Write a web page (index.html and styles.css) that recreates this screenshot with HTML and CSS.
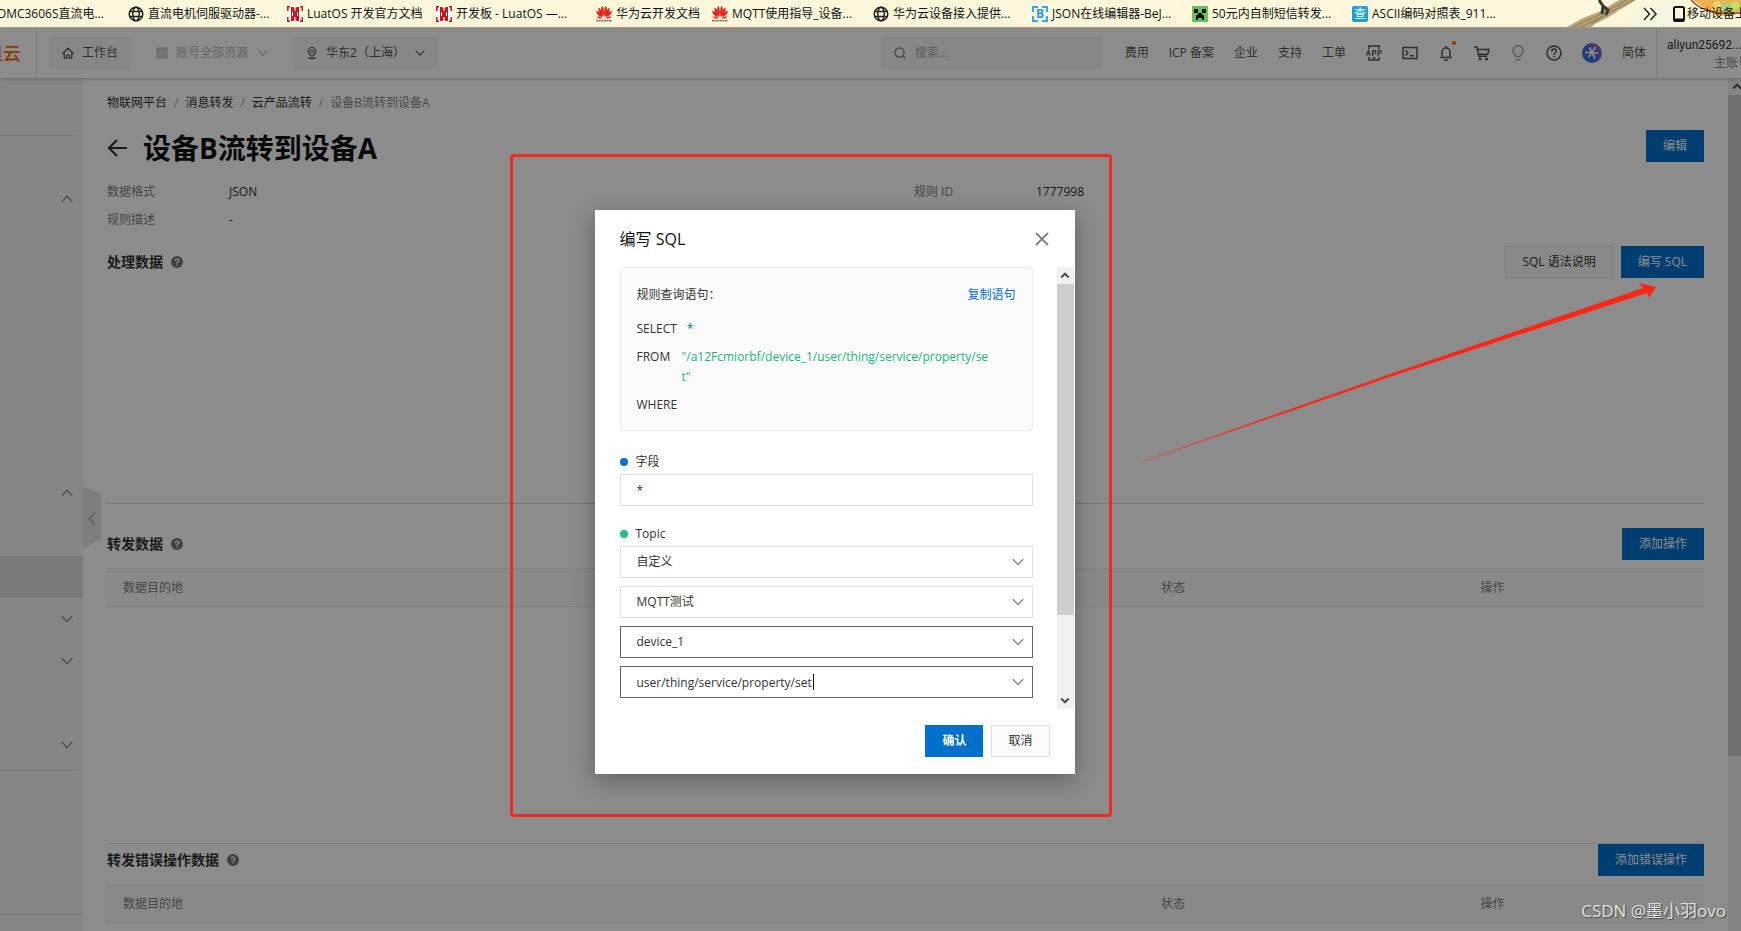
FILE: index.html
```html
<!DOCTYPE html>
<html lang="zh-CN">
<head>
<meta charset="utf-8">
<title>设备B流转到设备A</title>
<link rel="stylesheet" href="styles.css">
</head>
<body>
<svg class="defs" aria-hidden="true">
  <symbol id="globe" viewBox="0 0 16 16"><g fill="none" stroke="#222" stroke-width="1.5"><circle cx="8" cy="8" r="6.8"/><ellipse cx="8" cy="8" rx="3.2" ry="6.8"/><path d="M1.5 5.6h13M1.5 10.4h13"/></g></symbol>
  <symbol id="luat" viewBox="0 0 16 16"><path fill="#fff" d="M0 0h16v16H0z"/><path fill="#c8161d" d="M4 1h2l2 1 2-1h2v14h-2l-2-1-2 1H4z"/><path fill="#fff" d="M7.500 0h1v5h-1zM7.500 11h1v5h-1zM5 6h1v4H5zM10 6h1v4h-1z"/><path fill="none" stroke="#c8161d" stroke-width="1.500" d="M3 .8H.8V5M.8 11v4.200H3M13 .8h2.200V5M15.200 11v4.200H13"/></symbol>
  <symbol id="huawei" viewBox="0 0 16 16"><g fill="#e2231a"><path d="M7.700 10.500C4.800 7 4.300 1.500 6.500 0 8 1.500 8 6.500 7.700 10.500zM8.300 10.500C11.200 7 11.700 1.500 9.500 0 8 1.500 8 6.500 8.300 10.500z"/><path d="M7 10.700C3.300 8.200 1.500 4.500 2.800 1.800 5 3 6.700 7 7 10.700zM9 10.700c3.700-2.500 5.500-6.200 4.200-8.900C11 3 9.300 7 9 10.700z"/><path d="M6.500 11.200C2.300 10.200 0 7.500.2 4.800 3 5.500 5.500 8.200 6.500 11.200zM9.500 11.200c4.200-1 6.500-3.700 6.300-6.400-2.800.7-5.300 3.400-6.300 6.400z"/><path d="M6.300 12.300c-2.300.6-4.600 0-5.600-1.800 2-.4 4.500.2 5.600 1.800zM9.700 12.300c2.300.6 4.600 0 5.600-1.800-2-.4-4.500.2-5.600 1.800z"/></g><path stroke="#776" stroke-width="1.800" stroke-dasharray="2 .6" d="M0 14.700h16"/></symbol>
  <symbol id="down" viewBox="0 0 12 12"><path fill="none" stroke="currentColor" stroke-width="1.300" d="M.8 3.200 6 8.600l5.200-5.400"/></symbol>
  <symbol id="up" viewBox="0 0 12 12"><path fill="none" stroke="currentColor" stroke-width="1.300" d="M.8 8.600 6 3.200l5.200 5.400"/></symbol>
  <symbol id="bar-up" viewBox="0 0 12 12"><path fill="none" stroke="currentColor" stroke-width="2" d="M2.200 8 6 4.200 9.800 8"/></symbol>
  <symbol id="bar-down" viewBox="0 0 12 12"><path fill="none" stroke="currentColor" stroke-width="2" d="M2.200 4 6 7.800 9.800 4"/></symbol>
  <symbol id="tip" viewBox="0 0 12 12"><circle cx="6" cy="6" r="6" fill="#777"/><path fill="none" stroke="#fff" stroke-width="1.300" d="M4.200 4.800C4.300 2.500 7.900 2.600 7.800 4.700 7.700 5.900 6 5.900 6 7.400M6 8.300v1.300"/></symbol>
</svg>

<nav class="bookmarks" aria-label="书签栏">
  <svg class="art" viewBox="0 0 180 27" aria-hidden="true">
    <path fill="#b9a57a" d="M6 27 22 18 40 11 58 0h17L60 9 46 18 34 24 30 27z"/>
    <path fill="none" stroke="#80704a" stroke-width=".8" d="M12 27 38 15 66 0M20 27 44 15 72 0M30 24 46 14"/>
    <path fill="none" stroke="#3c3a38" stroke-width="3" d="M38 0 42 6 41 14M42 6l5 4-2 5"/>
    <path fill="#f6f5df" d="M68 27C70-2 122-4 124 27z"/>
    <path fill="#edb04f" d="M132 0h48v12q-14 8-30 1z"/>
    <path fill="#b9ca63" d="M154 2h26v10h-18z"/><path fill="none" stroke="#a64b2c" stroke-width="1.500" d="M130 0q14 16 50 13"/>
    <circle cx="156" cy="5" r="4" fill="#f5cf6a"/><circle cx="165" cy="9" r="4" fill="#a8cf8a"/><circle cx="174" cy="5" r="4" fill="#d8d56a"/>
  </svg>
  <a class="bm first" href="#"><span>DMC3606S直流电...</span></a>
  <a class="bm" href="#"><svg><use href="#globe"/></svg><span>直流电机伺服驱动器-...</span></a>
  <a class="bm" href="#"><svg><use href="#luat"/></svg><span>LuatOS 开发官方文档</span></a>
  <a class="bm" href="#"><svg><use href="#luat"/></svg><span>开发板 - LuatOS —...</span></a>
  <a class="bm" href="#"><svg><use href="#huawei"/></svg><span>华为云开发文档</span></a>
  <a class="bm" href="#"><svg><use href="#huawei"/></svg><span>MQTT使用指导_设备...</span></a>
  <a class="bm" href="#"><svg><use href="#globe"/></svg><span>华为云设备接入提供...</span></a>
  <a class="bm" href="#"><b class="fav json">B</b><span>JSON在线编辑器-BeJ...</span></a>
  <a class="bm" href="#"><svg viewBox="0 0 16 16"><path fill="#62c654" d="M0 0h16v16H0z"/><path d="M2 3h4v4H2zM10 3h4v4h-4zM6 7h4v2h2v5h-2v-2H6v2H4V9h2z"/></svg><span>50元内自制短信转发...</span></a>
  <a class="bm" href="#"><b class="fav cha">查</b><span>ASCII编码对照表_911...</span></a>
  <button class="more" type="button" aria-label="更多书签"><svg viewBox="0 0 14 14"><path fill="none" stroke="#222" stroke-width="1.500" d="M1 1l5.500 6L1 13M7.500 1 13 7l-5.500 6"/></svg></button>
  <a class="mobile" href="#"><svg viewBox="0 0 12 16"><rect x="1" y="1" width="10" height="14" rx="1.500" fill="none" stroke="#111" stroke-width="2"/><path stroke="#111" stroke-width="2" d="M2 13.500h8"/></svg><span>移动设备上的书签</span></a>
</nav>

<div class="app">
  <header class="top">
    <a class="logo" href="#">里云</a>
    <div class="top-left">
      <button class="chip" type="button"><svg viewBox="0 0 12 12"><path fill="none" stroke="currentColor" stroke-width="1.200" d="M.6 6.500 6 1.200l5.400 5.300M2.200 5.500v5.700h2.500V8h2.600v3.200h2.500V5.500"/></svg>工作台</button>
      <button class="chip ghost" type="button"><svg viewBox="0 0 12 12"><path fill="none" stroke="currentColor" stroke-width="1.200" d="M1 1.200h10v2H1zM1 5h10v2H1zM1 8.800h10v2H1z"/></svg>账号全部资源<svg class="caret"><use href="#down"/></svg></button>
      <button class="chip region" type="button"><svg viewBox="0 0 12 12"><path fill="none" stroke="currentColor" stroke-width="1.200" d="M6 9.500C3.500 7.500 2.300 6 2.300 4.200a3.700 3.700 0 0 1 7.400 0C9.700 6 8.500 7.500 6 9.500zM2 11.400h8"/><circle cx="6" cy="4.200" r="1.500" fill="none" stroke="currentColor"/></svg>华东2（上海）<svg class="caret"><use href="#down"/></svg></button>
    </div>
    <label class="search"><svg viewBox="0 0 12 12"><circle cx="5.500" cy="5.500" r="4.600" fill="none" stroke="#777" stroke-width="1.200"/><path stroke="#777" stroke-width="1.300" d="m8.700 8.700 2.700 2.900"/></svg><input type="search" placeholder="搜索..." aria-label="搜索"></label>
    <nav class="links">
      <a href="#">费用</a><a href="#">ICP 备案</a><a href="#">企业</a><a href="#">支持</a><a href="#">工单</a>
      <button type="button" aria-label="App"><svg viewBox="0 0 16 16"><path fill="none" stroke="currentColor" stroke-width="1.500" d="M3 4V1h10v3M3 12v3h10v-3M6.500 13h3"/><path fill="none" stroke="currentColor" stroke-width="1.200" d="M.6 10.500 2.400 5.500l1.800 5M1 9h2.800M6.600 11V5.600h1.800a1.400 1.400 0 0 1 0 2.900H6.600M12 11V5.600h1.800a1.400 1.400 0 0 1 0 2.900H12"/></svg></button>
      <button type="button" aria-label="命令行"><svg viewBox="0 0 16 16"><path fill="none" stroke="currentColor" stroke-width="1.500" d="M1 2.500h14v11H1zM3.500 5.500 6 8l-2.500 2.500M8 10.700h4"/></svg></button>
      <button class="bell" type="button" aria-label="通知"><svg viewBox="0 0 16 16"><path fill="none" stroke="currentColor" stroke-width="1.500" d="M2.500 12.500h11M4 12.500V7a4 4 0 0 1 8 0v5.500M8 3V1M6 15h4"/></svg></button>
      <button type="button" aria-label="购物车"><svg viewBox="0 0 16 16"><path fill="none" stroke="currentColor" stroke-width="1.500" d="M0 2h3l1.800 9.300h8.400M3.500 4.500H15l-1.400 4.700H4.500"/><circle cx="6" cy="14" r="1.500" fill="currentColor"/><circle cx="12.500" cy="14" r="1.500" fill="currentColor"/></svg></button>
      <button class="dim" type="button" aria-label="提示"><svg viewBox="0 0 16 16"><path fill="none" stroke="currentColor" stroke-width="1.500" d="M5.700 11.500C5.700 9.500 3 8.800 3 5.700a5 5 0 0 1 10 0c0 3.100-2.700 3.800-2.700 5.800zM5.500 14.700h5"/></svg></button>
      <button type="button" aria-label="帮助"><svg viewBox="0 0 16 16"><g fill="none" stroke="currentColor" stroke-width="1.500"><circle cx="8" cy="8" r="7"/><path d="M5.700 6.500c0-3.200 4.700-3.100 4.600-.2C10.200 7.900 8 7.700 8 9.800M8 11v1.500"/></g></svg></button>
      <button class="ai" type="button" aria-label="AI 助手"><svg viewBox="0 0 20 20"><defs><linearGradient id="ball" x1="1" y1="0" x2="0" y2="1"><stop offset="0" stop-color="#e85a86"/><stop offset=".4" stop-color="#5667d8"/><stop offset="1" stop-color="#2876e8"/></linearGradient></defs><circle cx="10" cy="10" r="10" fill="url(#ball)"/><path fill="none" stroke="#fff" stroke-width="1.700" d="M3 9.500h7l6 1M7.500 4.500l2.500 5 3 6M13.500 4 10 9.500 6.500 14"/></svg></button>
      <a href="#">简体</a>
    </nav>
    <div class="user"><span>aliyun25692...</span><small>主账号</small></div>
  </header>

  <div class="body">
    <nav class="side" aria-label="产品菜单">
      <div class="side-head"></div>
      <ul class="tree">
        <li><svg><use href="#up"/></svg></li><li></li><li></li><li></li><li></li><li></li><li></li>
        <li><svg><use href="#up"/></svg></li><li></li><li class="on"></li>
        <li><svg><use href="#down"/></svg></li><li><svg><use href="#down"/></svg></li><li></li><li><svg><use href="#down"/></svg></li>
      </ul>
      <div class="side-foot"></div>
      <button class="fold" type="button" aria-label="收起菜单"><svg viewBox="0 0 18 62"><path fill="#e6e6e6" d="M0 0 18 8v46L0 62z"/><path fill="none" stroke="#aaa" stroke-width="1.500" d="m12 26.500-6 6 6 6"/></svg></button>
    </nav>

    <main class="page">
      <ol class="crumbs"><li><a href="#">物联网平台</a></li><li><a href="#">消息转发</a></li><li><a href="#">云产品流转</a></li><li>设备B流转到设备A</li></ol>
      <div class="title-row">
        <a class="back" href="#" aria-label="返回"><svg viewBox="0 0 20 18"><path fill="none" stroke="#333" stroke-width="2.200" d="M20 9H2M10 1 2 9l8 8"/></svg></a>
        <h1>设备B流转到设备A</h1>
        <button class="btn primary" type="button">编辑</button>
      </div>
      <dl class="info">
        <dt>数据格式</dt><dd>JSON</dd><dt>规则 ID</dt><dd>1777998</dd>
        <dt>规则描述</dt><dd>-</dd>
      </dl>
      <section class="process">
        <div class="sec-head"><h2>处理数据</h2><svg class="tip"><use href="#tip"/></svg><div class="acts"><button class="btn" type="button">SQL 语法说明</button><button class="btn primary" type="button">编写 SQL</button></div></div>
      </section>
      <section class="forward">
        <div class="sec-head"><h2>转发数据</h2><svg class="tip"><use href="#tip"/></svg><div class="acts"><button class="btn primary" type="button">添加操作</button></div></div>
        <table><thead><tr><th>数据目的地</th><th>状态</th><th>操作</th></tr></thead></table>
      </section>
      <section class="errors">
        <div class="sec-head"><h2>转发错误操作数据</h2><svg class="tip"><use href="#tip"/></svg><div class="acts"><button class="btn primary" type="button">添加错误操作</button></div></div>
        <table><thead><tr><th>数据目的地</th><th>状态</th><th>操作</th></tr></thead></table>
      </section>
    </main>
    <div class="bar page-bar" aria-hidden="true"><svg><use href="#bar-up"/></svg><div class="thumb"></div></div>
  </div>

  <div class="mask"></div>
  <div class="dialog" role="dialog" aria-labelledby="dlg-title">
    <div class="dlg-head"><h3 id="dlg-title">编写 SQL</h3><button class="close" type="button" aria-label="关闭"><svg viewBox="0 0 14 14"><path stroke="#808080" stroke-width="1.800" d="m1 1 12 12M13 1 1 13"/></svg></button></div>
    <div class="dlg-body">
      <form class="form">
        <div class="sql">
          <div class="sql-head"><span>规则查询语句：</span><a href="#">复制语句</a></div>
          <div class="line select"><span>SELECT</span><code class="blue">*</code></div>
          <div class="line from"><span>FROM</span><code class="green">"/a12Fcmiorbf/device_1/user/thing/service/property/se<br>t"</code></div>
          <div class="line"><span>WHERE</span></div>
        </div>
        <label class="lab" for="field"><i class="dot"></i>字段</label>
        <div class="ctl"><input id="field" type="text" value="*"></div>
        <label class="lab topic" for="topic"><i class="dot g"></i>Topic</label>
        <div class="ctl"><select id="topic"><option>自定义</option></select><svg><use href="#down"/></svg></div>
        <div class="ctl"><select aria-label="产品"><option>MQTT测试</option></select><svg><use href="#down"/></svg></div>
        <div class="ctl dark"><select aria-label="设备"><option>device_1</option></select><svg><use href="#down"/></svg></div>
        <div class="ctl dark"><input class="typing" type="text" value="user/thing/service/property/set" aria-label="Topic 路径"><i class="cursor"></i><svg><use href="#down"/></svg></div>
      </form>
      <div class="bar dlg-bar" aria-hidden="true"><svg><use href="#bar-up"/></svg><div class="thumb"></div><svg class="end"><use href="#bar-down"/></svg></div>
    </div>
    <div class="dlg-foot"><button class="btn primary bold" type="button">确认</button><button class="btn" type="button">取消</button></div>
  </div>
  <div class="frame"></div>
  <svg class="arrow" viewBox="0 0 520 180" aria-hidden="true"><defs><linearGradient id="fade"><stop offset="0" stop-color="#fb2716" stop-opacity=".4"/><stop offset=".3" stop-color="#fb2716"/></linearGradient></defs><path fill="url(#fade)" d="M0 179 250 91 503 5 499 0 516 4 509 15 507 10 250 94 0 180z"/></svg>
  <div class="watermark">CSDN @墨小羽ovo</div>
</div>
</body>
</html>
```
FILE: styles.css
```css
* { box-sizing: border-box; }
body {
  margin: 0;
  height: 100vh;
  display: flex;
  flex-direction: column;
  overflow: hidden;
  font: 12px/20px "Open Sans", "Noto Sans CJK SC", sans-serif;
  color: #333;
  background: #fff;
}
a { color: inherit; text-decoration: none; }
button, input, select { font: inherit; color: inherit; }
button { border: 0; padding: 0; background: none; cursor: pointer; }
h1, h2, h3, ol, ul, dl, dd { margin: 0; padding: 0; }
ol, ul { list-style: none; }
svg { display: block; flex: none; }
.defs { position: absolute; width: 0; height: 0; }

/* bookmarks */
.bookmarks {
  position: relative;
  flex: none;
  height: 28px;
  display: grid;
  grid-template-columns: 128px 159px 149px 160px 116px 161px 159px 160px 160px 160px 1fr 98px;
  align-items: center;
  background: #fcf7db;
  border-bottom: 1px solid #a9a583;
  color: #111;
  white-space: nowrap;
  overflow: hidden;
}
.art { position: absolute; right: 0; top: 0; width: 180px; height: 27px; }
.bm, .mobile { display: flex; align-items: center; gap: 4px; }
.bm svg { width: 16px; height: 16px; }
.bm.first { justify-content: flex-end; padding-right: 24px; }
.fav { width: 16px; height: 16px; line-height: 16px; text-align: center; }
.json { color: #1e9be8; border: 2px dashed #35a8ec; line-height: 12px; font-size: 12px; }
.cha { color: #fff; background: #1c9fe0; border-radius: 2px; font-weight: 400; }
.more { position: relative; justify-self: end; margin-right: -14px; }
.more svg { width: 14px; height: 14px; }
.mobile { position: relative; padding-left: 30px; gap: 2px; }
.mobile svg { width: 12px; height: 16px; }

/* header */
.app { position: relative; flex: 1; min-height: 0; display: flex; flex-direction: column; }
.top {
  position: relative;
  z-index: 1;
  flex: none;
  height: 50px;
  display: flex;
  align-items: center;
  box-shadow: 0 1px 4px rgba(0, 0, 0, .25);
  background: #fff;
  white-space: nowrap;
}
.logo {
  width: 37px;
  height: 50px;
  line-height: 50px;
  display: flex;
  justify-content: flex-end;
  padding-right: 15px;
  font-size: 18px;
  font-weight: 500;
  color: #ff6a00;
  border-right: 1px solid #e3e4e6;
}
.top-left { flex: 1; display: flex; padding-left: 12px; color: #555; }
.chip { height: 32px; display: flex; align-items: center; gap: 8px; padding: 0 13px; background: #f4f6f9; }
.chip svg { width: 12px; height: 12px; }
.ghost { background: none; color: #b4b6ba; margin: 0 12px; }
.chip .caret { width: 10px; height: 10px; margin-left: 2px; }
.search { width: 220px; height: 32px; display: flex; align-items: center; gap: 9px; padding: 0 13px; background: #f4f6f9; }
.search svg { width: 12px; height: 12px; }
.search input { width: 100%; border: 0; background: none; padding: 0; }
.search input::placeholder { color: #aaa; }
.links { display: flex; align-items: center; gap: 20px; margin: 0 10px 0 24px; color: #555; }
.links svg { width: 16px; height: 16px; }
.links .ai svg { width: 20px; height: 20px; }
.links .dim { color: #aaa; }
.bell { position: relative; }
.bell::after { content: ""; position: absolute; right: -2px; top: -4px; width: 4px; height: 4px; border-radius: 50%; background: #ff6a00; }
.user { width: 85px; height: 50px; padding: 8px 0 0 10px; border-left: 1px solid #e3e4e6; overflow: hidden; font-family: Roboto, "Noto Sans CJK SC", sans-serif; }
.user span, .user small { display: block; line-height: 18px; font-size: 12px; }
.user small { padding-left: 47px; color: #888; }

/* side */
.body { flex: 1; min-height: 0; display: flex; }
.side { position: relative; flex: none; width: 83px; background: #f5f5f5; display: flex; flex-direction: column; }
.side-head { height: 58px; margin: 0 8px 42px 0; border-bottom: 1px solid #dedede; }
.tree::after { content: ""; display: block; margin: 4px 8px 0 0; border-bottom: 1px solid #d6d6d6; }
.tree li { height: 42px; display: flex; align-items: center; justify-content: flex-end; padding-right: 10px; color: #888; }
.tree svg { width: 12px; height: 12px; }
.tree .on { background: #dedede; }
.side-foot { margin-top: auto; height: 17px; border-top: 1px solid #d6d6d6; }
.fold { position: absolute; left: 83px; top: 408px; }
.fold svg { width: 18px; height: 62px; }

/* page */
.page { flex: 1; min-width: 0; padding: 15px 24px 0; overflow: hidden; }
.crumbs { display: flex; }
.crumbs li + li::before { content: "/"; margin: 0 7px; color: #999; }
.crumbs li:last-child { color: #888; }
.title-row { display: flex; align-items: center; height: 36px; margin: 17px 0 16px; }
.back svg { width: 20px; height: 18px; }
h1 { flex: 1; margin-left: 16px; font-size: 28px; line-height: 36px; color: #111; }
.title-row .btn { align-self: flex-start; }
.btn { height: 32px; padding: 0 16px; border: 1px solid #dedede; background: #fafafa; white-space: nowrap; }
.btn.primary { border-color: #0070cc; background: #0070cc; color: #fff; }
.bold { font-weight: 600; }
.info { display: grid; grid-template-columns: 122px 685px 122px 1fr; row-gap: 8px; padding-bottom: 16px; }
.info dt { color: #808080; }
.sec-head { display: flex; align-items: center; height: 32px; }
h2 { font-size: 14px; line-height: 20px; font-weight: 700; color: #333; }
.tip { width: 12px; height: 12px; margin-left: 8px; }
.acts { display: flex; gap: 8px; margin-left: auto; }
.process { height: 258px; border-bottom: 1px solid #d6d6d6; }
.forward { height: 340px; padding-top: 24px; border-bottom: 1px solid #e5e5e5; }
table { width: 100%; margin-top: 8px; border-collapse: collapse; table-layout: fixed; }
th { height: 38px; padding: 0 16px; text-align: left; font-weight: 400; color: #808080; background: #fafafa; border: solid #ebebeb; border-width: 1px 0; }
th:nth-child(1) { width: 65%; }
th:nth-child(2) { width: 20%; }

/* scroll bars */
.bar { flex: none; display: flex; flex-direction: column; align-items: center; background: #f1f1f1; color: #505050; overflow: hidden; }
.bar svg { width: 12px; height: 17px; }
.thumb { width: 100%; background: #cdcdcd; }
.page-bar { width: 13px; }
.page-bar svg { margin-left: 4px; }
.page-bar .thumb { height: 661px; }
.dlg-bar { width: 17px; margin-right: 1px; }
.dlg-bar .thumb { height: 331px; }
.dlg-bar .end { margin-top: auto; }

/* dialog */
.mask { position: absolute; z-index: 2; inset: 0; background: rgba(0, 0, 0, .45); }
.dialog {
  position: absolute;
  z-index: 3;
  left: calc(50% - 276px);
  top: 182px;
  width: 480px;
  background: #fff;
  box-shadow: 0 6px 22px rgba(0, 0, 0, .32);
}
.dlg-head { display: flex; align-items: center; justify-content: space-between; height: 57px; padding: 0 26px 0 25px; }
h3 { font-size: 16px; line-height: 24px; font-weight: 400; color: #111; }
.close svg { width: 14px; height: 14px; }
.dlg-body { display: flex; justify-content: space-between; height: 442px; overflow: hidden; }
.form { width: 413px; margin-left: 25px; }
.sql { height: 164px; padding: 17px 16px; margin-bottom: 19px; border: 1px solid #ebebeb; border-radius: 4px; background: #fbfbfb; }
.sql-head { display: flex; justify-content: space-between; margin-bottom: 14px; }
.sql-head a { color: #0070cc; }
.line { display: flex; margin-bottom: 8px; }
.line span { flex: none; }
.line code { font-family: inherit; }
.select code { margin-left: 10px; }
.from span { width: 45px; }
.blue { color: #0070cc; }
.green { color: #1bb37c; }
.lab { display: flex; align-items: center; gap: 8px; height: 24px; }
.topic { margin-top: 16px; }
.dot { width: 8px; height: 8px; border-radius: 50%; background: #0070cc; }
.dot.g { background: #1dc08c; }
.ctl { display: grid; align-items: center; height: 32px; border: 1px solid #dedede; margin-bottom: 8px; color: #333; }
.ctl > * { grid-area: 1 / 1; }
.ctl input, .ctl select { width: 100%; height: 30px; padding: 0 16px; border: 0; outline: 0; background: none; appearance: none; }
.ctl .typing { caret-color: transparent; }
.cursor { width: 1px; height: 16px; margin-left: 192px; background: #111; }
.ctl svg { justify-self: end; width: 12px; height: 12px; margin-right: 8px; color: #808080; pointer-events: none; }
.dark { border-color: #666; }
.dlg-foot { display: flex; justify-content: flex-end; gap: 8px; padding: 16px 25px 17px; }

/* annotations */
.frame { position: absolute; z-index: 4; left: calc(50% - 361px); top: 126px; width: 602px; height: 663px; border: 3px solid #ec2c1f; border-radius: 4px; pointer-events: none; }
.arrow { position: absolute; z-index: 4; right: 81px; top: 255px; width: 520px; height: 180px; pointer-events: none; }
.watermark { position: absolute; z-index: 4; right: 15px; bottom: 8px; font-size: 17px; line-height: 24px; color: #e3e3e3; text-shadow: 1px 1px 1px #444; }
```
